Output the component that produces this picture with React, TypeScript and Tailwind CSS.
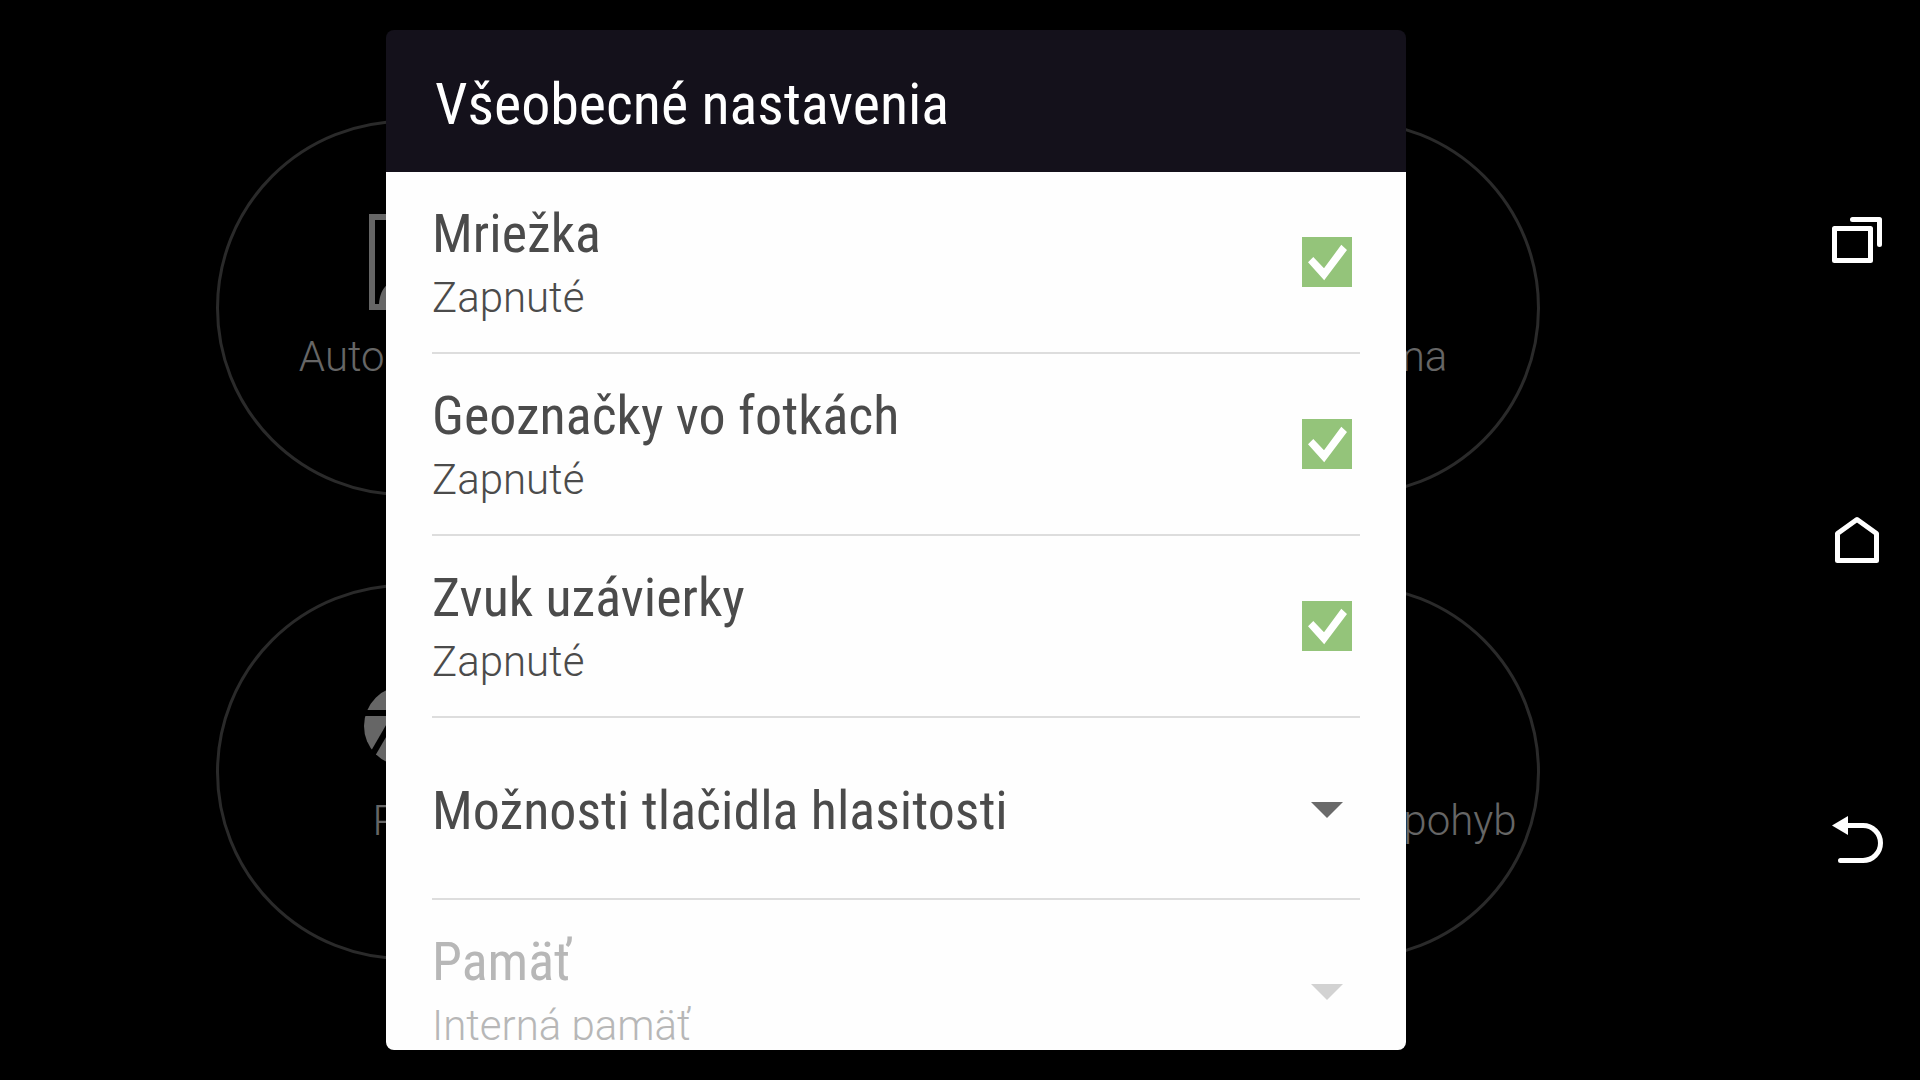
import React, { useState } from 'react'

const BLADES = [0, 60, 120, 180, 240, 300]

const options = [
  { id: 'grid', label: 'Mriežka' },
  { id: 'geotag', label: 'Geoznačky vo fotkách' },
  { id: 'shutter', label: 'Zvuk uzávierky' },
]

function PortraitIcon() {
  return (
    <svg width="70" height="96" viewBox="0 0 70 96" fill="none">
      <rect x="3" y="3" width="64" height="90" stroke="#666" strokeWidth="6" />
      <circle cx="35" cy="44" r="15" fill="#666" />
      <path d="M10 90C11 74 20 65 35 65s24 9 25 25z" fill="#666" />
    </svg>
  )
}

function ApertureIcon() {
  return (
    <svg width="80" height="80" viewBox="-40 -40 80 80" fill="none">
      <circle r="40" fill="#666" />
      {BLADES.map((angle) => (
        <path key={angle} d="M-42 -13H7.5" stroke="#000" strokeWidth="6" transform={`rotate(${angle})`} />
      ))}
    </svg>
  )
}

function Mode({ label, children }: { label: string; children?: React.ReactNode }) {
  return (
    <div className="flex size-[376px] flex-col items-center rounded-full border-3 border-[#2a2a2a] pt-[91px]">
      <div className="flex h-24 items-center">{children}</div>
      <p className="mt-[23px] text-[42px] leading-12 font-light whitespace-nowrap text-[#666]">{label}</p>
    </div>
  )
}

function Arrow() {
  return (
    <svg width="32" height="20" viewBox="0 0 32 20" fill="currentColor">
      <path d="M0 4H32L16 20z" />
    </svg>
  )
}

function CheckRow({ id, label }: { id: string; label: string }) {
  const [checked, setChecked] = useState(true)

  return (
    <label htmlFor={id} className="flex h-[182px] shrink-0 items-center justify-between border-b-2 border-[#dddddd] pr-2">
      <span className="flex flex-col gap-2">
        <span className="font-['Roboto_Condensed','Liberation_Sans_Narrow',sans-serif] text-[54px] leading-16">{label}</span>
        <span className="text-[42px] leading-12 font-light">{checked ? 'Zapnuté' : 'Vypnuté'}</span>
      </span>
      <span className="grid size-[50px]">
        <input
          id={id}
          type="checkbox"
          checked={checked}
          onChange={() => setChecked(!checked)}
          className="col-start-1 row-start-1 size-full appearance-none border-4 border-[#94c47a] checked:bg-[#94c47a]"
        />
        {checked && (
          <svg viewBox="0 0 50 50" fill="#fff" className="pointer-events-none col-start-1 row-start-1">
            <path d="M6 25.3L11.3 20L22 31.3L39.3 7.8L45 13L22.2 43.3z" />
          </svg>
        )}
      </span>
    </label>
  )
}

export default function App() {
  return (
    <div className="flex h-screen min-h-[600px] overflow-hidden bg-black font-['Roboto',sans-serif]">
      <main className="relative flex-1 overflow-hidden">
        <div className="flex flex-col gap-[88px] pt-[120px] pr-[252px] pl-[216px]">
          <div className="flex justify-between">
            <Mode label="Autoportrét"><PortraitIcon /></Mode>
            <Mode label="Panoráma" />
          </div>
          <div className="flex justify-between">
            <Mode label="Pro"><ApertureIcon /></Mode>
            <Mode label="Spomalený pohyb" />
          </div>
        </div>

        <div className="absolute inset-0 flex justify-center py-[30px]">
          <section className="flex w-full max-w-[1020px] flex-col text-[#4b4b4b]">
            <header className="flex h-[142px] shrink-0 items-center rounded-t-lg bg-[#14111b] px-[49px] pt-1.5">
              <h1 className="font-['Roboto_Condensed','Liberation_Sans_Narrow',sans-serif] text-[58px] leading-[70px] text-white">Všeobecné nastavenia</h1>
            </header>
            <div className="flex min-h-0 flex-1 flex-col rounded-b-lg bg-[#fefefe] px-[46px] pb-2.5">
              <div className="flex min-h-0 flex-1 flex-col overflow-hidden">
                {options.map((option) => (
                  <CheckRow key={option.id} id={option.id} label={option.label} />
                ))}
                <button type="button" className="flex h-[182px] shrink-0 items-center justify-between border-b-2 border-[#dddddd] pr-[17px] text-left">
                  <span className="pt-1.5 font-['Roboto_Condensed','Liberation_Sans_Narrow',sans-serif] text-[54px] leading-16">Možnosti tlačidla hlasitosti</span>
                  <span className="text-[#6a6a6a]"><Arrow /></span>
                </button>
                <button type="button" disabled className="flex h-[182px] shrink-0 items-center justify-between border-b-2 border-[#dddddd] pr-[17px] text-left text-[#b7b7b7]">
                  <span className="flex flex-col gap-2">
                    <span className="font-['Roboto_Condensed','Liberation_Sans_Narrow',sans-serif] text-[54px] leading-16">Pamäť</span>
                    <span className="text-[42px] leading-12 font-light">Interná pamäť</span>
                  </span>
                  <span className="text-[#d2d2d2]"><Arrow /></span>
                </button>
              </div>
            </div>
          </section>
        </div>
      </main>

      <nav className="flex w-32 flex-col py-[90px] text-white">
        <button type="button" aria-label="Recent apps" className="flex flex-1 items-center justify-center">
          <svg width="54" height="48" viewBox="0 0 54 48" fill="none" stroke="currentColor" strokeWidth="5" strokeLinejoin="round" strokeLinecap="round">
            <rect x="5.5" y="12.5" width="36" height="32" />
            <path d="M23.5 3.5H50.5V28.5" />
          </svg>
        </button>
        <button type="button" aria-label="Home" className="flex flex-1 items-center justify-center">
          <svg width="54" height="48" viewBox="0 0 54 48" fill="none" stroke="currentColor" strokeWidth="5" strokeLinejoin="round">
            <path d="M8.5 17.5V44.5H47.5V17.5L28 3.5z" />
          </svg>
        </button>
        <button type="button" aria-label="Back" className="flex flex-1 items-center justify-center">
          <svg width="54" height="48" viewBox="0 0 54 48" fill="none">
            <path d="M17 9.5H34A17.5 17.5 0 0 1 34 44.5H11.5" stroke="currentColor" strokeWidth="5" strokeLinecap="round" />
            <path d="M3 9.5L19 0V19z" fill="currentColor" />
          </svg>
        </button>
      </nav>
    </div>
  )
}
